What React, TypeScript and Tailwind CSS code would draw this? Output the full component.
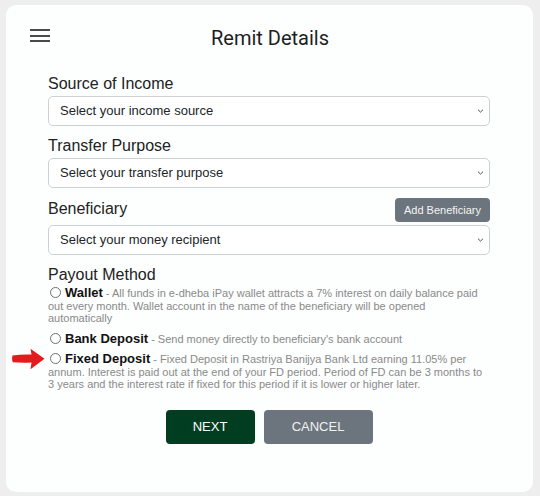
const selects = [
  { label: 'Source of Income', placeholder: 'Select your income source' },
  { label: 'Transfer Purpose', placeholder: 'Select your transfer purpose' },
];

function Chevron() {
  return (
    <svg
      className="pointer-events-none absolute right-[6px] top-1/2 -translate-y-1/2"
      width="7"
      height="5"
      viewBox="0 0 7 5"
    >
      <polyline points="1,1.2 3.5,3.6 6,1.2" fill="none" stroke="#4a4f54" strokeWidth="1" />
    </svg>
  );
}

function SelectBox({ placeholder }: { placeholder: string }) {
  return (
    <div className="relative">
      <select className="block h-[30px] w-full appearance-none rounded-[5px] border border-[#cdd1d4] bg-white pl-[11px] pr-6 text-[13px] text-[#212529] outline-none">
        <option>{placeholder}</option>
      </select>
      <Chevron />
    </div>
  );
}

function Radio() {
  return (
    <span className="ml-[2px] mr-[4px] inline-block h-[11px] w-[11px] rounded-full border border-[#6f6f6f] bg-white align-[-1px]" />
  );
}

function RedArrow() {
  return (
    <svg
      className="absolute left-[-36px] top-[-5px]"
      width="33"
      height="22"
      viewBox="0 0 33 22"
    >
      <path
        d="M0.5,7.5 Q10,6 19.5,6.5 L18.5,0.8 L32.5,10.8 L18.5,21.2 L19.5,14.5 Q10,15 0.8,14.2 Q-0.5,11 0.5,7.5 Z"
        fill="#e31b1d"
      />
    </svg>
  );
}

const options = [
  {
    title: 'Wallet',
    text: 'All funds in e-dheba iPay wallet attracts a 7% interest on daily balance paid out every month. Wallet account in the name of the beneficiary will be opened automatically',
  },
  {
    title: 'Bank Deposit',
    text: "Send money directly to beneficiary's bank account",
  },
  {
    title: 'Fixed Deposit',
    text: 'Fixed Deposit in Rastriya Banijya Bank Ltd earning 11.05% per annum. Interest is paid out at the end of your FD period. Period of FD can be 3 months to 3 years and the interest rate if fixed for this period if it is lower or higher later.',
    arrow: true,
  },
];

export default function App() {
  return (
    <div className="h-[496px] bg-[#eeeeee] pb-[4px] pl-[6px] pr-[7px] pt-[5px] font-['Liberation_Sans',Arial,sans-serif]">
      <div className="h-full rounded-[10px] bg-[#fdfefe] pl-[42px] pr-[43px] pt-[22px]">
        <div className="-ml-[18px] -mr-[20px] grid h-[28px] grid-cols-[1fr_auto_1fr] items-start">
          <div className="flex w-[20px] flex-col gap-[3.5px] pt-[2px]">
            <span className="h-[2px] bg-[#4a4a4a]" />
            <span className="h-[2px] bg-[#4a4a4a]" />
            <span className="h-[2px] bg-[#4a4a4a]" />
          </div>
          <h1 className="-mt-[3px] font-['Roboto',sans-serif] text-[20px] leading-[28px] text-[#1e1e1e]">
            Remit Details
          </h1>
          <div />
        </div>

        <div className="mt-[17px] flex flex-col">
          {selects.map((s, i) => (
            <div key={i} className={i > 0 ? 'mt-2' : ''}>
              <label className="block text-[16px] leading-6 text-[#222]">{s.label}</label>
              <SelectBox placeholder={s.placeholder} />
            </div>
          ))}

          <div className="mt-[9px] flex h-[28px] items-start justify-between">
            <label className="text-[16px] leading-6 text-[#222]">Beneficiary</label>
            <button className="mt-[1px] h-[24px] rounded-[4px] bg-[#6c757d] px-[9px] text-[11px] text-[#f4f4f4]">
              Add Beneficiary
            </button>
          </div>
          <SelectBox placeholder="Select your money recipient" />

          <label className="mt-2 block text-[16px] leading-6 text-[#222]">Payout Method</label>
          {options.map((o, i) => (
            <div
              key={i}
              className={`relative text-[11px] leading-[12.5px] text-[#8a8a8a] ${i > 0 ? 'mt-2' : ''}`}
            >
              {o.arrow && <RedArrow />}
              <Radio />
              <span className="text-[13px] font-bold text-[#111]">{o.title}</span> - {o.text}
            </div>
          ))}

          <div className="mt-[19px] flex justify-center gap-[9px]">
            <button className="h-[34px] w-[89px] rounded-[4px] bg-[#013d20] text-[13px] text-white">
              NEXT
            </button>
            <button className="h-[34px] w-[109px] rounded-[4px] bg-[#6c757d] text-[13px] text-[#f1f1f1]">
              CANCEL
            </button>
          </div>
        </div>
      </div>
    </div>
  );
}
